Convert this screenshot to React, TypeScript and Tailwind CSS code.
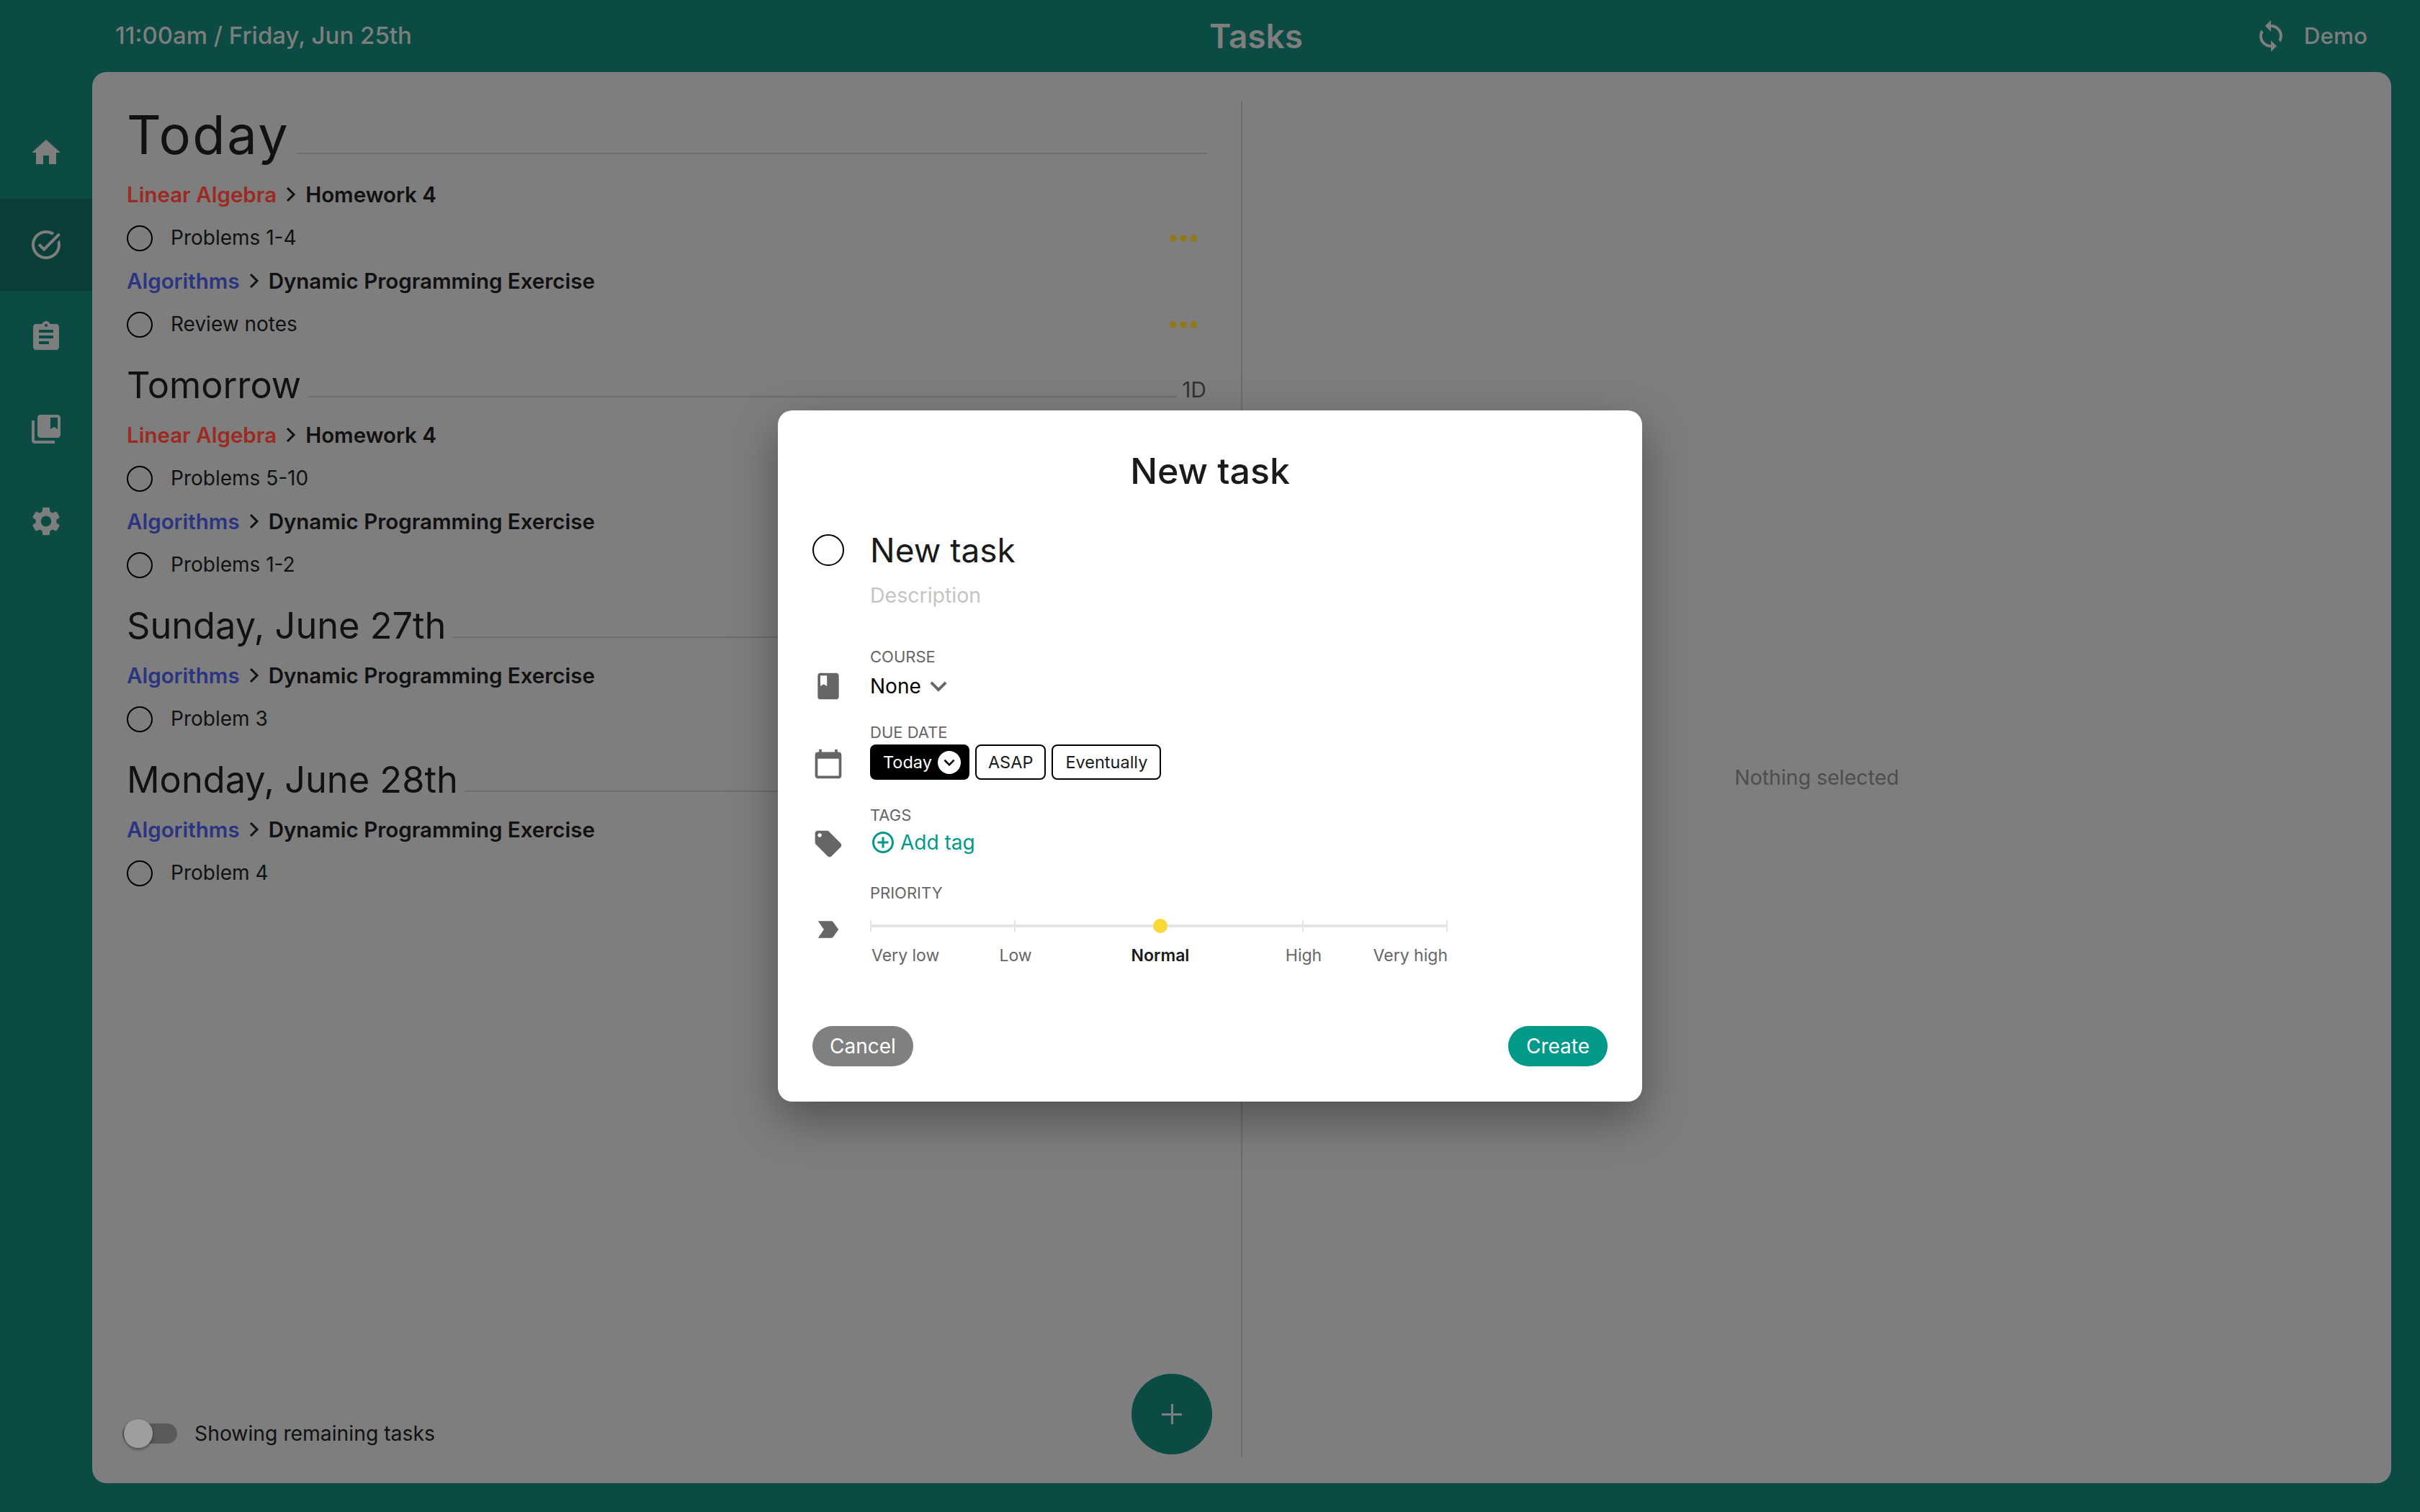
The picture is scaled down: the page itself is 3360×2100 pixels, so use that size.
import { ReactNode } from 'react';
import {
  MdHome,
  MdTaskAlt,
  MdAssignment,
  MdCollectionsBookmark,
  MdSettings,
  MdSync,
  MdBook,
  MdCalendarToday,
  MdLocalOffer,
  MdLabelImportant,
  MdAddCircleOutline,
  MdExpandMore,
} from 'react-icons/md';

const RED = 'text-[#9c2a22]';
const BLUE = 'text-[#2a3480]';

type Task = { course: string; color: string; project: string; name: string; dots?: boolean };

const sections: { title: string; first?: boolean; tag?: string; tasks: Task[] }[] = [
  {
    title: 'Today',
    first: true,
    tasks: [
      { course: 'Linear Algebra', color: RED, project: 'Homework 4', name: 'Problems 1-4', dots: true },
      { course: 'Algorithms', color: BLUE, project: 'Dynamic Programming Exercise', name: 'Review notes', dots: true },
    ],
  },
  {
    title: 'Tomorrow',
    tag: '1D',
    tasks: [
      { course: 'Linear Algebra', color: RED, project: 'Homework 4', name: 'Problems 5-10' },
      { course: 'Algorithms', color: BLUE, project: 'Dynamic Programming Exercise', name: 'Problems 1-2' },
    ],
  },
  {
    title: 'Sunday, June 27th',
    tasks: [{ course: 'Algorithms', color: BLUE, project: 'Dynamic Programming Exercise', name: 'Problem 3' }],
  },
  {
    title: 'Monday, June 28th',
    tasks: [{ course: 'Algorithms', color: BLUE, project: 'Dynamic Programming Exercise', name: 'Problem 4' }],
  },
];

const navItems = [MdHome, MdTaskAlt, MdAssignment, MdCollectionsBookmark, MdSettings];

function TaskGroup({ task }: { task: Task }) {
  return (
    <>
      <div className="h-[60px] flex items-center text-[29.5px] font-semibold">
        <span className={task.color}>{task.course}</span>
        <svg width="14" height="22" viewBox="0 0 14 22" className="mx-[13px]" fill="none" stroke="#111" strokeWidth="3">
          <path d="M2 2l9 9-9 9" />
        </svg>
        <span className="text-[#111]">{task.project}</span>
      </div>
      <div className="h-[60px] flex items-center">
        <div className="mt-[1px] w-9 h-9 rounded-full border-2 border-black" />
        <span className="ml-[25px] text-[28px] text-[#111]">{task.name}</span>
        {task.dots && (
          <div className="ml-auto mr-[13px] mt-[2px] flex gap-1">
            <div className="w-2.5 h-2.5 rounded-full bg-[#8f7a1c]" />
            <div className="w-2.5 h-2.5 rounded-full bg-[#8f7a1c]" />
            <div className="w-2.5 h-2.5 rounded-full bg-[#8f7a1c]" />
          </div>
        )}
      </div>
    </>
  );
}

function Field({ label, icon, children, className }: { label: string; icon: ReactNode; children: ReactNode; className: string }) {
  return (
    <div className={`flex ${className}`}>
      <div className="w-[128px] pl-[48px] pr-[36px] shrink-0 flex items-end justify-center">{icon}</div>
      <div className="flex-1">
        <div className="text-[22px] leading-[26px] text-[#666] uppercase">{label}</div>
        {children}
      </div>
    </div>
  );
}

export default function App() {
  const ticks = ['Very low', 'Low', 'Normal', 'High', 'Very high'];

  return (
    <div className="relative w-[3360px] h-[2100px] overflow-hidden bg-[#0b4b43] font-['Inter',sans-serif] flex flex-col">
      <header className="h-[100px] shrink-0 pl-[128px] grid grid-cols-3 items-center text-[#7e7e7e]">
        <div className="pl-8 text-[33px] font-medium whitespace-nowrap">11:00am / Friday, Jun 25th</div>
        <div className="text-center text-[46px] font-semibold">Tasks</div>
        <div className="pr-[73px] flex items-center justify-end gap-[22px] text-[31.5px] font-medium">
          <MdSync size={48} />
          <span>Demo</span>
        </div>
      </header>

      <div className="flex-1 flex pb-10">
        <nav className="w-[128px] shrink-0 pt-12 text-[#7e7e7e]">
          {navItems.map((Icon, i) => (
            <div key={i} className={`h-[128px] flex items-center justify-center ${i === 1 ? 'bg-[#093f38]' : ''}`}>
              <Icon size={48} />
            </div>
          ))}
        </nav>

        <main className="flex-1 mr-10 rounded-[20px] bg-[#7e7e7e] flex pt-10 pb-9">
          <section className="relative w-[1597px] shrink-0 border-r-2 border-[#6c6c6c] pl-12 pr-[48px]">
            {sections.map((s) => (
              <div key={s.title}>
                <div className={`flex items-end ${s.first ? 'h-[100px]' : 'h-[94px]'}`}>
                  <h2 className={`text-[#111] whitespace-nowrap leading-none ${s.first ? 'text-[74px] tracking-[2.5px] mb-[16px]' : 'text-[50.5px] mb-[14px]'}`}>{s.title}</h2>
                  <div className={`flex-1 ml-[10px] h-0.5 bg-[#6c6c6c] ${s.first ? 'mb-[26px]' : 'mb-[22px]'}`} />
                  {s.tag && <span className="ml-2 mb-[18px] text-[30px] leading-none text-[#333]">{s.tag}</span>}
                </div>
                {s.tasks.map((t) => (
                  <TaskGroup key={t.name} task={t} />
                ))}
              </div>
            ))}

            <div className="absolute left-[42px] bottom-[12px] flex items-center">
              <div className="relative w-[76px] h-7 rounded-full bg-[#5a5a5a]">
                <div className="absolute left-[2px] -top-1.5 w-10 h-10 rounded-full bg-[#9e9e9e] shadow-[0_2px_4px_rgba(0,0,0,0.4)]" />
              </div>
              <span className="ml-6 text-[28.3px] text-[#111]">Showing remaining tasks</span>
            </div>
            <div className="absolute right-[40px] bottom-[4px] w-28 h-28 rounded-full bg-[#0b4b43] flex items-center justify-center">
              <svg width="28" height="28" viewBox="0 0 28 28" fill="#7e7e7e">
                <rect x="13" width="3" height="28" />
                <rect y="13" width="28" height="3" />
              </svg>
            </div>
          </section>
          <section className="flex-1 flex items-center justify-center pb-[4px] text-[28.5px] text-[#4d4d4d]">Nothing selected</section>
        </main>
      </div>

      <div className="absolute inset-0 flex items-center justify-center">
        <div className="w-[1200px] h-[960px] bg-white rounded-[20px] shadow-[0_24px_64px_rgba(0,0,0,0.36)] flex flex-col text-[#1a1a1a]">
          <h1 className="pt-[50px] text-center text-[50px] leading-[68px] font-medium">New task</h1>

          <div className="mt-[46px] flex items-center h-[60px] pl-[48px]">
            <div className="w-[44px] h-[44px] rounded-full border-2 border-black" />
            <span className="ml-9 text-[46px] leading-none">New task</span>
          </div>
          <div className="pl-[128px] mt-[15px] text-[28.5px] leading-[36px] text-[#c4c4c4]">Description</div>

          <Field className="mt-[54px]" label="Course" icon={<MdBook size={44} className="text-[#666] -mb-1" />}>
            <div className="mt-[10px] flex items-center text-[28px] leading-[36px] text-black">
              None
              <MdExpandMore size={46} className="-my-2 ml-[1px] text-[#666]" />
            </div>
          </Field>

          <Field className="mt-[33px]" label="Due date" icon={<MdCalendarToday size={48} className="text-[#666] -mb-[2px]" />}>
            <div className="mt-1 flex gap-[8px] text-[23.5px]">
              <div className="h-[49px] pl-[18px] pr-[12px] rounded-[8px] bg-black text-white flex items-center">
                Today
                <span className="ml-[8px] w-[32px] h-[32px] rounded-full bg-white flex items-center justify-center">
                  <MdExpandMore size={30} className="text-black" />
                </span>
              </div>
              <div className="h-[49px] px-[16px] rounded-[8px] border-2 border-black flex items-center">ASAP</div>
              <div className="h-[49px] px-[17px] rounded-[8px] border-2 border-black flex items-center">Eventually</div>
            </div>
          </Field>

          <Field className="mt-[36px]" label="Tags" icon={<MdLocalOffer size={44} className="text-[#666] -mb-1.5" />}>
            <div className="mt-[7px] flex items-center text-[28px] leading-[36px] text-[#00998a]">
              <MdAddCircleOutline size={36} className="mr-[6px]" />
              Add tag
            </div>
          </Field>

          <Field className="mt-[39px]" label="Priority" icon={<MdLabelImportant size={40} className="text-[#666] mb-[31px]" />}>
            <div className="relative mt-[15px] w-[802px] h-[36px] flex items-center justify-between">
              <div className="absolute inset-x-0 top-[16px] h-1 bg-[#e5e5e5]" />
              {ticks.map((t, i) => (
                <div key={t} className="relative w-0.5 h-4 bg-[#e5e5e5]">
                  {i === 2 && <div className="absolute -left-[7px] -top-[2px] w-5 h-5 rounded-full bg-[#fdd835]" />}
                </div>
              ))}
            </div>
            <div className="relative mt-[8px] w-[802px] h-[30px] flex justify-between text-[23px] leading-[30px] text-[#666]">
              <span className="ml-[2px]">Very low</span>
              <span className="absolute left-[202px] -translate-x-1/2">Low</span>
              <span className="absolute left-[403px] -translate-x-1/2 font-semibold text-[#1a1a1a]">Normal</span>
              <span className="absolute left-[602px] -translate-x-1/2">High</span>
              <span>Very high</span>
            </div>
          </Field>

          <div className="mt-auto mb-[49px] px-[48px] flex justify-between text-[28px] text-white">
            <button className="h-[56px] px-6 rounded-full bg-[#808080]">Cancel</button>
            <button className="h-[56px] px-[25px] rounded-full bg-[#00998a]">Create</button>
          </div>
        </div>
      </div>
    </div>
  );
}
